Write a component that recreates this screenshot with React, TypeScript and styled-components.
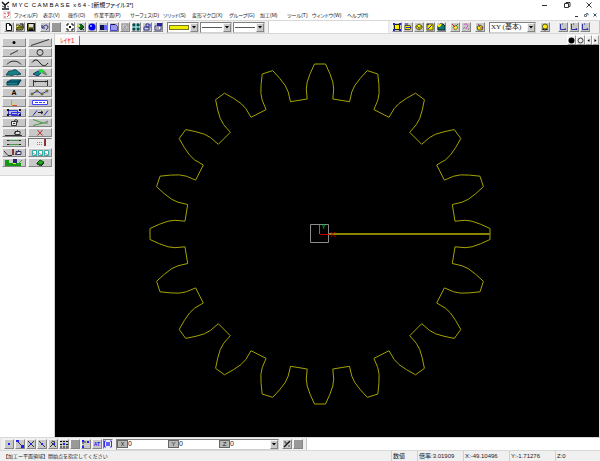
import React from "react";
import styled, { createGlobalStyle, css } from "styled-components";

const Global = createGlobalStyle`
  * { box-sizing: border-box; }
  body { margin: 0; background: #fff; }
  button, input, select { font: inherit; color: inherit; margin: 0; padding: 0; border-radius: 0; }
`;

const Shell = styled.div`
  height: 100vh;
  display: flex;
  flex-direction: column;
  overflow: hidden;
  background: #fff;
  color: #222;
  font: 6px/10px "Liberation Sans", "Noto Sans CJK JP", sans-serif;
  white-space: pre;
`;

const TitleBar = styled.header`
  flex: none;
  height: 10px;
  display: flex;
  align-items: center;
  padding: 0 7px 0 1px;
  gap: 2px;
`;
const Title = styled.h1`
  margin: 0;
  flex: 1;
  font-size: 6px;
  line-height: 10px;
  font-weight: 400;
  color: #000;
  font-feature-settings: "palt";
`;
const WindowButtons = styled.div<{ $gap: number }>`
  display: flex;
  gap: ${(p) => p.$gap}px;
`;
const FlatButton = styled.button`
  width: 8px;
  height: 8px;
  border: 0;
  background: none;
  display: grid;
  place-items: center;
`;

const MenuBar = styled.nav`
  flex: none;
  height: 10px;
  display: flex;
  align-items: center;
  padding: 0 1px 0 3px;
`;
const Menus = styled.div`
  flex: 1;
  display: grid;
  grid-template-columns: 29px 25px 26px 36px 33px 29px 37px 31px 27px 25px 35px auto;
  justify-content: start;
  padding-left: 3px;
`;
const MenuItem = styled.button`
  border: 0;
  background: none;
  text-align: left;
  font-size: 5px;
  line-height: 10px;
  font-feature-settings: "palt";
`;

const ToolRow = styled.div`
  flex: none;
  height: 14px;
  display: flex;
  justify-content: space-between;
  background: #fff;
  border-top: 1px solid #d8d8d8;
  border-bottom: 1px solid #d8d8d8;
`;
const Band = styled.div<{ $gap: number; $end?: number }>`
  display: flex;
  align-items: center;
  gap: ${(p) => p.$gap}px;
  padding: 0 ${(p) => p.$end ?? 3}px 0 3px;
  background: #f0f0f0;
  border-right: 1px solid #c4c4c4;
  border-left: 1px solid #e4e4e4;
`;
const Group = styled.div`
  display: flex;
  gap: 1px;
`;

const bevel = css`
  background: #c8c8c8;
  border: 1px solid;
  border-color: #f4f4f4 #858585 #858585 #f4f4f4;
`;
const ToolButton = styled.button<{ $pressed?: boolean }>`
  ${bevel}
  width: 10px;
  height: 10px;
  display: grid;
  place-items: center;
  overflow: hidden;
  ${(p) => p.$pressed && css`background: #ececec; border-color: #777 #eee #eee #777;`}
`;
const SelectBox = styled.label<{ $width: number }>`
  width: ${(p) => p.$width}px;
  height: 11px;
  display: grid;
  grid-template-columns: 1fr 8px;
  align-items: center;
  background: #fff;
  border: 1px solid;
  border-color: #808080 #d0d0d0 #d0d0d0 #808080;
  & > * { grid-row: 1; }
`;
const Select = styled.select`
  grid-column: 1 / 3;
  width: 100%;
  height: 9px;
  appearance: none;
  border: 0;
  background: none;
  outline: 0;
  padding-left: 1px;
  font: 7px/9px "Liberation Serif", "Noto Sans CJK JP", serif;
`;
const Swatch = styled.span<{ $fill?: boolean }>`
  grid-column: 1;
  margin: 0 1px;
  pointer-events: none;
  height: ${(p) => (p.$fill ? 5 : 1)}px;
  background: ${(p) => (p.$fill ? "#f0ee00" : "#555")};
  border: ${(p) => (p.$fill ? "1px solid #77772a" : "0")};
`;
const Arrow = styled.span`
  ${bevel}
  grid-column: 2;
  height: 9px;
  display: grid;
  place-items: center;
  pointer-events: none;
`;

const Workspace = styled.main`
  flex: 1;
  min-height: 0;
  display: flex;
`;
const Side = styled.aside`
  width: 55px;
  flex: none;
  background: #fff;
  border-right: 1px solid #d0d0d0;
`;
const Palette = styled.div`
  display: grid;
  grid-template-columns: 1fr 1fr;
  grid-auto-rows: 9px;
  gap: 1px 2px;
  padding: 4px 2px 8px;
  background: #f0f0f0;
  border-bottom: 1px solid #d8d8d8;
`;
const PaletteButton = styled(ToolButton)`
  width: auto;
  height: auto;
`;
const Letter = styled.span`
  font-size: 7px;
  line-height: 7px;
  font-weight: 700;
  color: #000;
`;
const Document = styled.section`
  flex: 1;
  min-width: 0;
  display: flex;
  flex-direction: column;
  border-right: 1px solid #e4e4e4;
`;
const TabRow = styled.div`
  flex: none;
  height: 11px;
  display: flex;
  justify-content: space-between;
  align-items: flex-end;
  background: #f0f0f0;
`;
const Tab = styled.button`
  height: 10px;
  width: 25px;
  border: 1px solid;
  border-bottom: 0;
  border-color: #fff #777 #fff #fff;
  border-radius: 2px 2px 0 0;
  background: #fafafa;
  color: #f22;
  font-size: 7px;
  line-height: 8px;
`;
const LayerButton = styled.button<{ $narrow?: boolean }>`
  width: ${(p) => (p.$narrow ? 7 : 9)}px;
  height: 10px;
  border: 1px solid;
  border-color: #fff #999 #999 #fff;
  background: #f0f0f0;
  display: grid;
  place-items: center;
`;
const LayerButtons = styled.div`
  display: flex;
`;
const Canvas = styled.svg`
  flex: 1;
  min-height: 0;
  width: 100%;
  background: #000;
  display: block;
`;

const Coords = styled.div`
  display: flex;
  align-items: center;
  height: 11px;
  background: #fff;
  border: 1px solid;
  border-color: #808080 #d0d0d0 #d0d0d0 #808080;
`;
const CoordField = styled.label`
  display: flex;
  align-items: center;
  width: 51px;
`;
const AxisTag = styled.span`
  width: 11px;
  height: 8px;
  flex: none;
  background: #b8b8b8;
  border: 1px solid #666;
  text-align: center;
  font-size: 6px;
  line-height: 6px;
`;
const CoordInput = styled.input`
  min-width: 0;
  flex: 1;
  border: 0;
  background: none;
  outline: 0;
  font-size: 7px;
  line-height: 8px;
  height: 8px;
`;
const DropButton = styled(ToolButton)`
  width: 8px;
  height: 9px;
`;

const StatusBar = styled.footer`
  flex: none;
  height: 10px;
  display: flex;
  justify-content: space-between;
  background: #f0f0f0;
  padding-left: 3px;
  font-size: 6px;
`;
const Message = styled.span`
  font-size: 5px;
`;
const Readouts = styled.div`
  display: grid;
  grid-template-columns: 26px 46px 46px 46px 45px;
`;
const Readout = styled.output`
  border-left: 1px solid #cfcfcf;
  padding-left: 1px;
`;

type Art = React.ReactNode;
const Icon = ({ w = 8, h = 8, children }: { w?: number; h?: number; children: Art }) => (
  <svg width={w} height={h} viewBox={`0 0 ${w} ${h}`} fill="none" stroke="#333" strokeWidth="1" aria-hidden="true">
    {children}
  </svg>
);
const Triangle = () => (
  <Icon w={6} h={6}><path d="M1 2h4L3 4.5z" fill="#000" stroke="none" /></Icon>
);

type Tool = [string, Art];

const fileTools: Tool[] = [
  ["新規", <path d="M1.5.5h3l2 2v5h-5zM4.5.5v2h2" fill="#fff" stroke="#111" />],
  ["開く", <><path d="M0 7V2h3l1 1h3v2" fill="#ee3" stroke="#443" /><path d="M0 7l2-3h6L6 7z" fill="#882" stroke="#332" /><path d="M4 1h3v2" stroke="#111" /></>],
  ["保存", <><path d="M.5.5h7v7h-7z" fill="#773" stroke="#111" /><path d="M2 1h4v3H2z" fill="#ddd" stroke="none" /><path d="M2 5.500h4v2H2z" fill="#111" stroke="none" /></>],
];
const undoTools: Tool[] = [
  ["元に戻す", <path d="M1 2v3h3M1.500 4.500C4 1 7 2 7 4c0 1-1 2-2 3" stroke="#228" />],
  ["やり直し", <path d="M0 0h8v8H0z" fill="#999" stroke="none" />],
];
const viewTools: Tool[] = [
  ["全体表示", <><path d="M0 0h8v8H0z" fill="#fff" stroke="none" /><path d="M1 3V1h2M5 1h2v2M7 5v2H5M3 7H1V5M3 3l2 2M5 3L3 5" stroke="#000" /></>],
  ["移動", <><path d="M1 3l3-2 3 3-3 3z" fill="#161" stroke="#052" /><path d="M1 2h2v2H1z" fill="#dd4" stroke="none" /><path d="M4 5l3 2" stroke="#111" /></>],
  ["回転", <><circle cx="4" cy="4" r="3.500" fill="#00e" stroke="none" /><circle cx="3" cy="3" r="1" fill="#9cf" stroke="none" /></>],
  ["拡大", <><path d="M1 2h4v5H1z" fill="#114" stroke="none" /><path d="M5 2h3v5H5z" fill="#66f" stroke="none" /></>],
  ["縮小", <><path d="M.5 1.500h5l2 2v4h-7z" fill="#99e" stroke="#44c" /><path d="M1 1.500h4" stroke="#115" /></>],
  ["再描画", <path d="M1 1h6v6H1zM1 7l6-6M3 3l2 3" stroke="#999" />],
  ["分割", <><path d="M1 1h2v2H1zM5 1h2v2H5zM1 5h2v2H1zM5 5h2v2H5z" fill="#1aa" stroke="#033" /><path d="M4 0v8M0 4h8" stroke="#7dd" /></>],
  ["情報", <><path d="M1 4h5v3H1zM3 1h3v3H3z" fill="#ccd" stroke="#338" /><path d="M6 2h2v3" stroke="#44c" /></>],
  ["属性", <><path d="M1 3h6v4H1z" fill="#fff" stroke="#338" /><path d="M3 0h5v3H3z" fill="#22a" stroke="none" /><path d="M2 5h3" stroke="#555" /></>],
];
const solid = (d: string, accent?: Art): Art => (
  <><path d={d} fill="#fe0" stroke="#552" />{accent}</>
);
const planeTools: Tool[] = [
  ["平面", <><path d="M1.500 1.500h5v5h-5z" fill="#fe0" stroke="#220" /><path d="M0 0h2v2H0zM6 0h2v2H6zM0 6h2v2H0zM6 6h2v2H6z" fill="#22c" stroke="none" /></>],
  ["移動面", solid("M1 2.500h5l1 2-1 2H1z", <path d="M2 4.500h5M1 1h3" stroke="#22c" />)],
  ["立体面", solid("M1 3l3-2 3 2v2L4 7 1 5z", <path d="M2 3l2 2 3-2M4 5v2" stroke="#553" />)],
  ["傾斜面", solid("M1 1h6v6H1z", <path d="M2 6l4-4M1 1l2 1" stroke="#229" />)],
  ["要素面", <><path d="M1 7V3l2-2h3l2 2v4z" fill="#177" stroke="#022" /><path d="M1 2l2-1h2L3 4H1z" fill="#fe0" stroke="none" /></>],
];
const helpTools: Tool[] = [
  ["軸設定", <><path d="M2 4l3-2 2 3-3 2z" fill="#ee2" stroke="#883" /><path d="M1 1l3 3" stroke="#e22" /><path d="M7 1L5 3" stroke="#282" /></>],
  ["軸確認", <><path d="M2 2c1-2 4-1 4 1L4 5v1" stroke="#d4c" /><path d="M1 6l2-2M6 7l1-2" stroke="#888" /></>],
];
const solidTool: Tool[] = [["登録", solid("M1 4l3-2 3 2-1 3H2z", <path d="M2 1l2 3M4 5h3" stroke="#838" />)]];
const lightTool: Tool[] = [["表示面", <><circle cx="4" cy="3.500" r="2.500" fill="#fe0" stroke="#552" /><path d="M1 6l3 1 3-1" stroke="#111" /></>]];
const axis = (c: string): Art => <><path d="M1.500 1v5.500H7" stroke="#33a" /><path d="M3 1h1M6 5l1 2" stroke={c} /></>;
const axisTools: Tool[] = [["XY軸", axis("#558")], ["YZ軸", axis("#22a")], ["ZX軸", axis("#22c")]];

const snapTools: Tool[] = [
  ["点", <path d="M3 3h2v2H3z" fill="#22e" stroke="none" />],
  ["端点", <><path d="M1 1l6 6" stroke="#333" /><path d="M0 0h3v2H0zM5 5h3v3H5z" fill="#22e" stroke="none" /></>],
  ["交点", <><path d="M1 1l6 6M7 1L1 7" /><path d="M3 3h2v2H3z" fill="#22e" stroke="none" /></>],
  ["中点", <><path d="M1 1l6 6" /><path d="M3 3h2v2H3z" fill="#22e" stroke="none" /></>],
  ["垂点", <><path d="M1 7l5-5M2 2l5 5M3 1l3 1" /><path d="M4 3h2v2H4z" fill="#22e" stroke="none" /></>],
  ["格子", <><path d="M0 1.500h8M0 4.500h8M0 7h8" strokeDasharray="2 1" stroke="#111" /><path d="M3 3h2v2H3z" fill="#22e" stroke="none" /></>],
  ["自由点", <path d="M0 0h8v8H0z" fill="#999" stroke="none" />],
  ["四半点", <><path d="M1 7V2h5" strokeDasharray="2 1" /><path d="M0 0h2v2H0zM5 1h2v2H5zM0 6h2v2H0z" fill="#22e" stroke="none" /></>],
];

const teal = "#188088";
const wide = (art: Art): Art => <Icon w={22} h={7}>{art}</Icon>;
const paletteTools: Tool[] = [
  ["点", wide(<circle cx="11" cy="3.500" r="1.500" fill="#000" stroke="none" />)],
  ["線", wide(<path d="M2 6.500L20 .5" />)],
  ["線分", wide(<path d="M7 5.500l8-4" />)],
  ["円", wide(<circle cx="11" cy="3.500" r="3" />)],
  ["円弧", wide(<path d="M4 5.500C7 1 15 1 18 5.500" />)],
  ["曲線", wide(<path d="M3 3.500C6 0 8 0 11 4s6 3 8 0" stroke="#111" />)],
  ["曲面", wide(<path d="M3 6l3-4c3 1 4-2 7-1l5 4-4 1c-2-2-5 2-7 0z" fill={teal} stroke="#145" />)],
  ["面編集", wide(<><path d="M4 5l5-3 4 1-4 4z" fill={teal} stroke="#146" /><path d="M10 1c4-1 6 2 8 5l-3-1-3-2z" fill="#888" stroke="#686" /><circle cx="12" cy="2" r="2" fill="#1e3" stroke="none" /></>)],
  ["ソリッド", wide(<><path d="M4 3l4-2h10l-3 5H4z" fill={teal} stroke="#045" /><path d="M4 3h11l3-2M15 3v3" stroke="#035" /></>)],
  ["寸法", wide(<><path d="M4.500 1v6M18.500 1v6M5 2.500h13" /><path d="M5 2.500l2-1v2zM18 2.500l-2-1v2z" fill="#222" stroke="none" /></>)],
  ["文字", <Letter>A</Letter>],
  ["点列", wide(<><path d="M3 5l5-3 5 3 5-3" stroke="#33a" /><g fill="#cc2" stroke="#553"><circle cx="3" cy="5" r="1" /><circle cx="8" cy="2" r="1" /><circle cx="13" cy="5" r="1" /><circle cx="18" cy="2" r="1" /></g></>)],
  ["座標", wide(<><path d="M8.500 1v5" stroke="#5d3" /><path d="M9 6.500h5" stroke="#d43" /><path d="M9 6l3-2" stroke="#dd5" /></>)],
  ["測定", wide(<><path d="M3.500 1.500h15v4h-15z" fill="#fff" stroke="#44f" /><path d="M6 3.500h10" stroke="#44f" strokeDasharray="3 1" /></>)],
  ["変形", wide(<><path d="M5.500 1.500h9v4h-9zM8.500 3.500h9v3h-9z" stroke="#33d" fill="#bbd" /><path d="M4 0h2v2H4zM16 0h2v2h-2zM4 5h2v2H4zM16 5h2v2h-2z" fill="#113" stroke="none" /></>)],
  ["移動", wide(<><path d="M4 6.500l4-5M15 6.500l4-5" stroke="#22b" /><path d="M9 3.500h5M12 2l2 1.500L12 5" stroke="#222" /></>)],
  ["修正", wide(<><path d="M8.500 2.500h5v4h-5z" fill="#eee" /><path d="M11 2l2-1.500 2 1.500-2 3M10 4.500h2" /></>)],
  ["トリム", wide(<><path d="M4 .5l10 3.500h5M4 6.500L14 4" stroke="#494" /><path d="M15 4l4-2" stroke="#777" /></>)],
  ["面取り", wide(<><path d="M2 6.500h17" /><path d="M12 2.500h5v3h-5zM11 5l4-4" fill="#ddd" /></>)],
  ["削除", wide(<path d="M8.500 1l5 5.500M13.500 1l-5 5.500" stroke="#b22" />)],
  ["領域", wide(<><path d="M5 1.500h12M5 5.500h12" stroke="#494" /><path d="M4 1h2v1H4zM16 1h2v1h-2zM4 5h2v1H4zM16 5h2v1h-2z" fill="#222" stroke="none" /></>)],
  ["平面領域", wide(<><path d="M8 3.500h6M8 5.500h6" stroke="#888" strokeDasharray="1 1" /><path d="M16 0v7" stroke="#833" strokeWidth="2" /></>)],
  ["切削", wide(<><path d="M1 2l4 4.500h4" /><path d="M10 0v6" stroke="#833" strokeWidth="2" /><path d="M13 2.500h5v3h-5zM12 6l4-5" fill="#ddd" stroke="#336" /></>)],
  ["工程", wide(<><path d="M3.500 1.500h4v5h-4zM9.500 1.500h4v5h-4zM15.500 1.500h4v5h-4z" fill="#fff" stroke="#3aa" /><path d="M4 4l3 2M10 4l3 2M16 4l3 2" stroke="#c77" /></>)],
  ["シミュレーション", wide(<><path d="M2 1h4v3h12v3H2z" fill="#191" stroke="none" /><path d="M10 0h4v4h-4z" fill="#227" stroke="none" /><path d="M10 4h3v1h-3z" fill="#ee2" stroke="none" /><path d="M15 5l4-4" stroke="#3a3" /></>)],
  ["出力", wide(<><path d="M8 4l3-3 4 2-3 3z" fill="#2a2" stroke="#151" /><path d="M8 4v1l4 2 3-3" stroke="#131" /></>)],
];

const menus = ["ファイル(F)", "表示(V)", "操作(O)", "作業平面(P)", "サーフェス(D)", "ソリッド(S)", "変形マクロ(X)", "グループ(G)", "加工(M)", "ツール(T)", "ウィンドウ(W)", "ヘルプ(H)"];

const Tools = ({ items }: { items: Tool[] }) => (
  <Group>
    {items.map(([name, art]) => (
      <ToolButton key={name} aria-label={name}><Icon>{art}</Icon></ToolButton>
    ))}
  </Group>
);

const teeth = 20;
const profile = [[-12.8, -135], [-13.7, -145], [-12.8, -152], [-9.8, -160.5], [-5.5, -170], [5.5, -170], [9.8, -160.5], [12.8, -152], [13.7, -145], [12.8, -135]];
const gear = Array.from({ length: teeth }, (_, i) => {
  const a = (i * 2 * Math.PI) / teeth;
  return profile
    .map(([x, y]) => `${(x * Math.cos(a) - y * Math.sin(a)).toFixed(1)},${(x * Math.sin(a) + y * Math.cos(a)).toFixed(1)}`)
    .join(" ");
}).join(" ");

const Minimize = () => <Icon><path d="M1 4.500h5" /></Icon>;
const Restore = () => <Icon><path d="M1.500 2.500h4v4h-4zM3 2.500v-1h4v4H6" /></Icon>;
const Close = () => <Icon><path d="M1.500 1.500l5 5M6.500 1.500l-5 5" /></Icon>;

export default function App() {
  return (
    <Shell>
      <Global />
      <TitleBar>
        <Icon w={9} h={9}><path d="M1 1l3 3 4-3M4 4v3M1 8h7" stroke="#111" strokeWidth="1.500" /><path d="M1 5l2 1M6 5l2 1" stroke="#555" /></Icon>
        <Title>M Y C  C A M B A S E  x 6 4 - [新規ファイル3*]</Title>
        <WindowButtons $gap={14}>
          <FlatButton aria-label="最小化"><Minimize /></FlatButton>
          <FlatButton aria-label="元のサイズ"><Restore /></FlatButton>
          <FlatButton aria-label="閉じる"><Close /></FlatButton>
        </WindowButtons>
      </TitleBar>
      <MenuBar>
        <Icon><path d="M.5.5h7v7h-7z" fill="#fff" stroke="#ddd" /><path d="M1 2l2 1M4 2h2v2L4 6M2 5v2" stroke="#e44" /><path d="M5 1l2 1" stroke="#88c" /></Icon>
        <Menus>{menus.map((m) => <MenuItem key={m}>{m}</MenuItem>)}</Menus>
        <WindowButtons $gap={1}>
          <FlatButton aria-label="文書を最小化"><Icon w={6} h={6}><path d="M1 4.500h3" /></Icon></FlatButton>
          <FlatButton aria-label="文書を元のサイズに"><Icon w={6} h={6}><path d="M1.500 2.500h2v2h-2zM3 1.500h2v2" stroke="#678" /></Icon></FlatButton>
          <FlatButton aria-label="文書を閉じる"><Icon w={6} h={6}><path d="M1.500 1.500l3 3M4.500 1.500l-3 3" stroke="#357" /></Icon></FlatButton>
        </WindowButtons>
      </MenuBar>
      <ToolRow>
        <Band $gap={4}>
          <Tools items={fileTools} />
          <Tools items={undoTools} />
          <Tools items={viewTools} />
          <Group>
            <SelectBox $width={32}>
              <Select aria-label="色"><option /></Select>
              <Swatch $fill />
              <Arrow><Triangle /></Arrow>
            </SelectBox>
            {["線種", "線幅"].map((name) => (
              <SelectBox key={name} $width={32}>
                <Select aria-label={name}><option /></Select>
                <Swatch />
                <Arrow><Triangle /></Arrow>
              </SelectBox>
            ))}
          </Group>
        </Band>
        <Band $gap={4} $end={5}>
          <Tools items={planeTools} />
          <Tools items={helpTools} />
          <Tools items={solidTool} />
          <SelectBox $width={47}>
            <Select aria-label="作業平面"><option>XY (基本)</option></Select>
            <Arrow><Triangle /></Arrow>
          </SelectBox>
          <Tools items={lightTool} />
          <span />
          <Tools items={axisTools} />
          <span />
        </Band>
      </ToolRow>
      <Workspace>
        <Side>
          <Palette>
            {paletteTools.map(([name, art]) => (
              <PaletteButton key={name} aria-label={name} $pressed={name === "平面領域"}>{art}</PaletteButton>
            ))}
          </Palette>
        </Side>
        <Document>
          <TabRow>
            <Tab>ﾚｲﾔ1</Tab>
            <LayerButtons>
              <LayerButton aria-label="表示レイヤ"><Icon w={7} h={7}><circle cx="3.500" cy="3.500" r="3" fill="#000" stroke="none" /></Icon></LayerButton>
              <LayerButton aria-label="非表示レイヤ"><Icon w={7} h={7}><circle cx="3.500" cy="3.500" r="2.500" /></Icon></LayerButton>
              <LayerButton $narrow aria-label="前へ"><Icon w={5} h={5}><path d="M3.500 1v3L1.500 2.500z" fill="#000" stroke="none" /></Icon></LayerButton>
              <LayerButton $narrow aria-label="次へ"><Icon w={5} h={5}><path d="M1.500 1v3l2-1.500z" fill="#000" stroke="none" /></Icon></LayerButton>
            </LayerButtons>
          </TabRow>
          <Canvas viewBox="-265 -189 544 392" fill="none" role="img" aria-label="歯車">
            <polygon points={gear} stroke="#a3a300" />
            <path d="M8 0h162" stroke="#8c8500" strokeWidth="2" />
            <path d="M-9.500-9.500h18v18h-18z" stroke="#8c8c8c" />
            <path d="M-.5 0v-9" stroke="#00b428" />
            <path d="M0 .5h9" stroke="#c80000" />
            <text x="1" y="-5" fill="#00b428" fontSize="8">Y</text>
            <text x="10" y="3" fill="#c80000" fontSize="8">X</text>
          </Canvas>
        </Document>
      </Workspace>
      <ToolRow>
        <Band $gap={3}>
          <Group>
            {snapTools.map(([name, art]) => (
              <ToolButton key={name} aria-label={name}><Icon>{art}</Icon></ToolButton>
            ))}
            <ToolButton aria-label="AT"><Icon><text x="4" y="6" textAnchor="middle" fill="#22e" stroke="none" fontSize="5" fontWeight="700">AT</text></Icon></ToolButton>
            <ToolButton $pressed aria-label="座標入力"><Icon><path d="M2 1H.5v6H2M6 1h1.500v6H6M2 3h4M2 5h4M3 2v4M5 2v4" stroke="#33e" /></Icon></ToolButton>
          </Group>
          <Coords>
            {["X", "Y", "Z"].map((a) => (
              <CoordField key={a}>
                <AxisTag>{a}</AxisTag>
                <CoordInput defaultValue="0" />
              </CoordField>
            ))}
            <DropButton aria-label="履歴"><Triangle /></DropButton>
          </Coords>
          <Group>
            <ToolButton aria-label="座標切替"><Icon><path d="M1 7l6-6" stroke="#111" strokeWidth="1.500" /><path d="M1 2h2v2M5 6h2" stroke="#444" /></Icon></ToolButton>
            <ToolButton aria-label="確定"><Icon><path d="M0 0h8v8H0z" fill="#999" stroke="none" /></Icon></ToolButton>
          </Group>
        </Band>
      </ToolRow>
      <StatusBar>
        <Message>【加工ー平面領域】開始点を指定してください</Message>
        <Readouts>
          <Readout>数値</Readout>
          <Readout>倍率:3.01909</Readout>
          <Readout>X:-49.10496</Readout>
          <Readout>Y:-1.71276</Readout>
          <Readout>Z:0</Readout>
        </Readouts>
      </StatusBar>
    </Shell>
  );
}
